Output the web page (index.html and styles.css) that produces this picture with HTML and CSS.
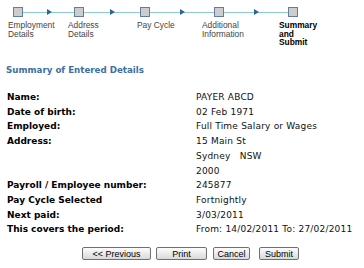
FILE: index.html
```html
<!DOCTYPE html>
<html lang="en">
<head>
    <meta charset="UTF-8">
    <title>Summary and Submit</title>
    <link rel="stylesheet" href="styles.css">
</head>
<body>
    <div class="steps">
        <div class="track">
            <span class="sq"></span>
            <span class="link w1"></span>
            <span class="sq"></span>
            <span class="link w2"></span>
            <span class="sq"></span>
            <span class="link w3"></span>
            <span class="sq"></span>
            <span class="link w3"></span>
            <span class="sq"></span>
        </div>
        <div class="labels">
            <div>Employment<br>Details</div>
            <div>Address<br>Details</div>
            <div>Pay Cycle</div>
            <div>Additional<br>Information</div>
            <div class="current">Summary<br>and<br>Submit</div>
        </div>
    </div>

    <h3 class="title">Summary of Entered Details</h3>

    <div class="details">
        <div class="lbl">Name:</div>
        <div class="val">PAYER ABCD</div>
        <div class="lbl">Date of birth:</div>
        <div class="val">02 Feb 1971</div>
        <div class="lbl">Employed:</div>
        <div class="val">Full Time Salary or Wages</div>
        <div class="lbl">Address:</div>
        <div class="val">15 Main St<br>Sydney&nbsp;&nbsp;&nbsp;NSW<br>2000</div>
        <div class="lbl">Payroll / Employee number:</div>
        <div class="val">245877</div>
        <div class="lbl">Pay Cycle Selected</div>
        <div class="val">Fortnightly</div>
        <div class="lbl">Next paid:</div>
        <div class="val">3/03/2011</div>
        <div class="lbl">This covers the period:</div>
        <div class="val">From: 14/02/2011 To: 27/02/2011</div>
    </div>

    <div class="buttons">
        <button class="btn prev">&lt;&lt; Previous</button>
        <button class="btn print">Print</button>
        <button class="btn cancel">Cancel</button>
        <button class="btn submit">Submit</button>
    </div>
</body>
</html>
```

FILE: styles.css
```css
body {
    margin: 0;
    background: #ffffff;
    font-family: "DejaVu Sans", Verdana, sans-serif;
    font-size: 9px;
    color: #111111;
}
.steps {
    padding-top: 7px;
    height: 58px;
    font-family: "Liberation Sans", Arial, sans-serif;
    font-size: 8.4px;
    line-height: 8.6px;
    color: #444444;
}
.track {
    display: flex;
    align-items: center;
    padding-left: 13px;
}
.sq {
    width: 8px;
    height: 8px;
    background: #cdcdcd;
    border: 1px solid #5f7f9c;
}
.link {
    position: relative;
    height: 1px;
    background: #8ccbd6;
}
.link::after {
    content: "";
    position: absolute;
    left: 50%;
    top: -3px;
    margin-left: -2px;
    border-left: 5px solid #2d64a0;
    border-top: 3.5px solid transparent;
    border-bottom: 3.5px solid transparent;
}
.w1 { width: 51px; }
.w2 { width: 56px; }
.w3 { width: 64px; }
.labels {
    display: grid;
    grid-template-columns: 60px 69px 65px 77px auto;
    padding-left: 8px;
    margin-top: 4px;
}
.current {
    font-weight: bold;
    color: #000000;
}
.title {
    margin: 0 0 0 6px;
    height: 25px;
    font-size: 8.7px;
    color: #3d6fa3;
}
.details {
    display: grid;
    grid-template-columns: 189px auto;
    padding-left: 7px;
    line-height: 14.7px;
}
.lbl {
    font-weight: bold;
    color: #000000;
}
.val {
    letter-spacing: 0.2px;
}
.buttons {
    display: flex;
    padding-left: 82px;
    margin-top: 10px;
}
.btn {
    height: 13px;
    padding: 0;
    font-family: "Liberation Sans", Arial, sans-serif;
    font-size: 9px;
    color: #000000;
    background: linear-gradient(#fdfdfd, #d9d9d9);
    border: 1px solid #707070;
    border-radius: 2px;
}
.prev { width: 69px; }
.print { width: 51px; margin-left: 5px; }
.cancel { width: 37px; margin-left: 6px; }
.submit { width: 40px; margin-left: 9px; }
```
